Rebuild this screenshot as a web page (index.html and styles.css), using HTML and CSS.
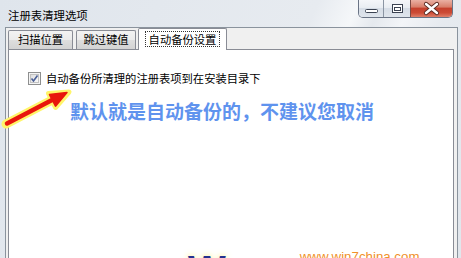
FILE: index.html
```html
<!DOCTYPE html>
<html lang="zh-CN">
<head>
<meta charset="utf-8">
<title>注册表清理选项</title>
<link rel="stylesheet" href="styles.css">
</head>
<body>
<div class="window">
  <div class="titlebar">
    <span class="title">注册表清理选项</span>
    <div class="caption-btns">
      <div class="cbtn min">
        <svg width="24" height="17" viewBox="0 0 24 17"><rect x="6.5" y="9.5" width="12" height="3" rx="1" fill="#fff" stroke="#3b4352"/></svg>
      </div>
      <div class="cbtn max">
        <svg width="26" height="17" viewBox="0 0 26 17"><rect x="8.5" y="4.5" width="10" height="8" fill="#fff" stroke="#3b4352"/><rect x="10.5" y="7.5" width="6" height="3" fill="#fff" stroke="#3b4352"/></svg>
      </div>
      <div class="cbtn close">
        <svg width="41" height="17" viewBox="0 0 41 17"><path d="M15 4 L26 13 M26 4 L15 13" stroke="#5a2a22" stroke-width="4.2" stroke-linecap="round"/><path d="M15 4 L26 13 M26 4 L15 13" stroke="#fff" stroke-width="2.4" stroke-linecap="round"/></svg>
      </div>
    </div>
  </div>
  <div class="client">
    <div class="tabs">
      <div class="tab t1">扫描位置</div>
      <div class="tab t2">跳过键值</div>
      <div class="tab active"><span class="focus">自动备份设置</span></div>
    </div>
    <div class="panel">
      <div class="check-row">
        <svg class="cb" width="13" height="13" viewBox="0 0 13 13">
          <defs><linearGradient id="cbg" x1="0" y1="0" x2="1" y2="1"><stop offset="0" stop-color="#dcdcdc"/><stop offset="1" stop-color="#fbfbfb"/></linearGradient></defs>
          <rect x="0.5" y="0.5" width="12" height="12" fill="#f4f4f4" stroke="#8e8f8f"/>
          <rect x="2.5" y="2.5" width="8" height="8" fill="url(#cbg)" stroke="#c2c2c2"/>
          <path d="M3.5 6.5 L5.5 9 L9.5 3.5" fill="none" stroke="#4a5f97" stroke-width="1.6"/>
        </svg>
        <span class="label">自动备份所清理的注册表项到在安装目录下</span>
      </div>
      <div class="note">默认就是自动备份的，不建议您取消</div>
    </div>
  </div>
  <svg class="arrow" width="461" height="258" viewBox="0 0 461 258">
    <g stroke="#fff56a" stroke-linejoin="round" stroke-linecap="round">
      <line x1="6" y1="124" x2="54" y2="99" stroke-width="9"/>
      <polygon points="69,92 48.5,93.5 55.5,107.5" fill="#fff56a" stroke-width="5"/>
    </g>
    <g stroke="#e8160c" stroke-linejoin="round" stroke-linecap="round">
      <line x1="7" y1="123.5" x2="54" y2="99" stroke-width="4.5"/>
      <polygon points="67,92.6 49.5,94.6 55.5,106.2" fill="#e8160c" stroke-width="1.5"/>
    </g>
  </svg>
  <div class="watermark">
    <span class="wlogo">W</span>
    <span class="url">www.win7china.com</span>
  </div>
</div>
</body>
</html>
```

FILE: styles.css
```css
* { box-sizing: border-box; }
html, body { margin: 0; padding: 0; }
body {
  width: 461px;
  height: 258px;
  overflow: hidden;
  background: #e3e8ed;
  font-family: "Noto Sans CJK SC", "Noto Sans", sans-serif;
}
.window {
  position: relative;
  width: 461px;
  height: 258px;
  overflow: hidden;
  background: linear-gradient(115deg, #dfe5ec 0%, #e7ebf0 55%, #f5f7f9 62%, #e5e9ee 66%, #f3f5f8 71%, #e6eaef 78%, #e1e6ec 100%);
}
.titlebar {
  display: flex;
  align-items: flex-start;
  height: 27px;
  padding-left: 8px;
}
.title {
  font-size: 11.4px;
  line-height: 14px;
  margin-top: 8px;
  color: #000;
}
.caption-btns {
  margin-left: auto;
  margin-right: 8px;
  display: flex;
  height: 18px;
  border: 1px solid #6a7485;
  border-top: none;
  border-radius: 0 0 5px 5px;
  overflow: hidden;
}
.cbtn { height: 17px; display: flex; }
.cbtn.min, .cbtn.max {
  background: linear-gradient(#f4f6f9 0%, #e9edf2 45%, #d6dde6 50%, #dfe5ec 100%);
}
.cbtn.min { width: 24px; }
.cbtn.max { border-left: 1px solid #8b95a3; width: 27px; }
.cbtn.close {
  width: 42px;
  border-left: 1px solid #7d4a44;
  background: linear-gradient(#eab0a3 0%, #d9806c 40%, #c5412d 50%, #cc4b35 75%, #e0806a 100%);
}
.client {
  margin: 0 3px 0 5px;
  height: 231px;
  border: 1px solid #8a939d;
  border-bottom: none;
  background: #f0f0f0;
}
.tabs {
  display: flex;
  align-items: flex-end;
  height: 21px;
}
.tab {
  height: 19px;
  border: 1px solid #898c95;
  border-bottom: none;
  border-radius: 2px 2px 0 0;
  background: linear-gradient(#f3f3f3 0%, #ebebeb 50%, #dedede 51%, #d3d3d3 100%);
  font-size: 11.3px;
  line-height: 17px;
  text-align: center;
  color: #000;
}
.t1 { margin-left: 2px; width: 65px; }
.t2 { margin-left: 3px; width: 60px; }
.tab.active {
  position: relative;
  z-index: 1;
  margin-left: 2px;
  width: 89px;
  height: 22px;
  margin-bottom: -1px;
  background: #fff;
  padding-top: 2px;
}
.focus {
  display: inline-block;
  border: 1px dotted #333;
  padding: 0 3px;
  line-height: 14px;
}
.panel {
  margin: 0 3px 0 2px;
  height: 210px;
  background: #fff;
  border: 1px solid #898c95;
  padding: 22px 0 0 19px;
}
.check-row {
  display: flex;
  align-items: center;
  gap: 5px;
  height: 13px;
}
.cb { flex: none; display: block; }
.label {
  font-size: 11.3px;
  line-height: 13px;
  color: #000;
  white-space: nowrap;
}
.note {
  margin: 15px 0 0 42px;
  font-size: 19px;
  line-height: 22px;
  font-weight: bold;
  color: #5f93ee;
  white-space: nowrap;
}
.arrow {
  position: absolute;
  left: 0;
  top: 0;
}
.watermark {
  position: absolute;
  left: 188px;
  top: 250px;
  display: flex;
  align-items: flex-start;
  font-family: "Liberation Sans", Arial, sans-serif;
}
.wlogo {
  font-size: 40px;
  line-height: 1;
  font-weight: bold;
  color: #24318f;
  text-shadow: 0 0 5px #fff6b0, 0 0 8px #fff6b0;
}
.url {
  margin-left: 74px;
  font-size: 13.3px;
  line-height: 1;
  color: #f0912a;
}
```
